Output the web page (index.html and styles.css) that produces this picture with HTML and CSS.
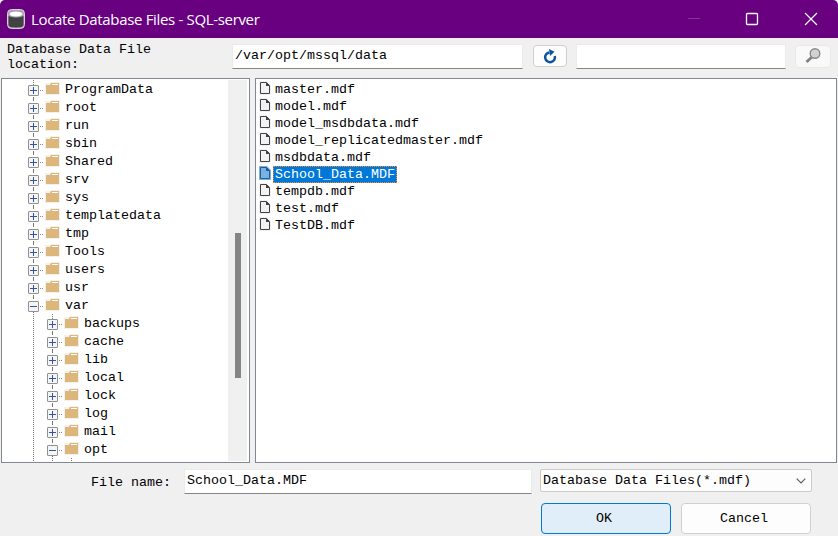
FILE: index.html
```
<!DOCTYPE html>
<html lang="en">
<head>
<meta charset="utf-8">
<title>Locate Database Files</title>
<link rel="stylesheet" href="styles.css">
</head>
<body>
<svg width="0" height="0" class="defs">
  <symbol id="folder" viewBox="0 0 15 13"><path d="M0 1h5V0h10v13H0z" fill="#f3f1ee"/><path d="M1 3h4l1-2h8v11H1z" fill="#dcb67a"/><path d="M7 2.500h6" stroke="#fff" fill="none"/></symbol>
  <symbol id="file" viewBox="0 0 12 14"><path d="M0 0h8l4 4v10H0z" class="halo"/><path d="M1.500 1.500h6l3 3v8h-9z" class="page"/><path d="M7 1l4 4H7z" class="fold"/></symbol>
</svg>
<div class="dialog">
  <header class="titlebar">
    <svg class="db" width="18" height="20" viewBox="0 0 18 20"><rect x=".5" y=".5" width="17" height="19" rx="4" fill="#a9a3ac" stroke="#d8cfdc"/><path d="M1.500 7q7.500 3 15 0v9q0 2.500-7.500 2.500T1.500 16z" fill="#424242"/><ellipse cx="9" cy="5" rx="6.500" ry="2.500" fill="#fff"/></svg>
    <h1>Locate Database Files - SQL-server</h1>
    <svg class="controls" width="132" height="14" viewBox="0 0 132 14" fill="none" stroke="#fff"><path d="M1 6.500h12" stroke="#86359a"/><rect x="59.500" y="1.500" width="11" height="11" rx="1" stroke-width="1.300"/><path d="M118 1l12 12M130 1l-12 12" stroke-width="1.200"/></svg>
  </header>
  <div class="toolbar">
    <div class="location">Database Data File<br>location:</div>
    <div class="field path">/var/opt/mssql/data</div>
    <div class="btn refresh"><svg width="14" height="15" viewBox="0 0 14 15"><path d="M6.500 3.400A4.900 4.900 0 1 0 11.800 7" fill="none" stroke="#0b559f" stroke-width="2.500"/><path d="M6 0l5.500 2.700L7 7z" fill="#0b559f"/></svg></div>
    <div class="field search"></div>
    <div class="btn find"><svg width="16" height="16" viewBox="0 0 16 16"><path d="M7.500 8.500L1.500 14" stroke="#828282" stroke-width="2.800"/><circle cx="10" cy="5.500" r="4.800" fill="#d2d2d2" stroke="#8b8b8b" stroke-width="1.400"/></svg></div>
  </div>
  <main class="panes">
    <div class="pane tree">
      <div class="rows">
        <div class="row"><i class="box plus"></i><svg><use href="#folder"/></svg><span>ProgramData</span></div>
        <div class="row"><i class="box plus"></i><svg><use href="#folder"/></svg><span>root</span></div>
        <div class="row"><i class="box plus"></i><svg><use href="#folder"/></svg><span>run</span></div>
        <div class="row"><i class="box plus"></i><svg><use href="#folder"/></svg><span>sbin</span></div>
        <div class="row"><i class="box plus"></i><svg><use href="#folder"/></svg><span>Shared</span></div>
        <div class="row"><i class="box plus"></i><svg><use href="#folder"/></svg><span>srv</span></div>
        <div class="row"><i class="box plus"></i><svg><use href="#folder"/></svg><span>sys</span></div>
        <div class="row"><i class="box plus"></i><svg><use href="#folder"/></svg><span>templatedata</span></div>
        <div class="row"><i class="box plus"></i><svg><use href="#folder"/></svg><span>tmp</span></div>
        <div class="row"><i class="box plus"></i><svg><use href="#folder"/></svg><span>Tools</span></div>
        <div class="row"><i class="box plus"></i><svg><use href="#folder"/></svg><span>users</span></div>
        <div class="row"><i class="box plus"></i><svg><use href="#folder"/></svg><span>usr</span></div>
        <div class="row"><i class="box"></i><svg><use href="#folder"/></svg><span>var</span></div>
        <div class="children">
          <div class="row"><i class="box plus"></i><svg><use href="#folder"/></svg><span>backups</span></div>
          <div class="row"><i class="box plus"></i><svg><use href="#folder"/></svg><span>cache</span></div>
          <div class="row"><i class="box plus"></i><svg><use href="#folder"/></svg><span>lib</span></div>
          <div class="row"><i class="box plus"></i><svg><use href="#folder"/></svg><span>local</span></div>
          <div class="row"><i class="box plus"></i><svg><use href="#folder"/></svg><span>lock</span></div>
          <div class="row"><i class="box plus"></i><svg><use href="#folder"/></svg><span>log</span></div>
          <div class="row"><i class="box plus"></i><svg><use href="#folder"/></svg><span>mail</span></div>
          <div class="row"><i class="box"></i><svg><use href="#folder"/></svg><span>opt</span></div>
          <div class="stub"></div>
        </div>
      </div>
      <div class="scroll"><div class="thumb"></div></div>
    </div>
    <div class="pane files">
      <div class="item"><svg><use href="#file"/></svg><span>master.mdf</span></div>
      <div class="item"><svg><use href="#file"/></svg><span>model.mdf</span></div>
      <div class="item"><svg><use href="#file"/></svg><span>model_msdbdata.mdf</span></div>
      <div class="item"><svg><use href="#file"/></svg><span>model_replicatedmaster.mdf</span></div>
      <div class="item"><svg><use href="#file"/></svg><span>msdbdata.mdf</span></div>
      <div class="item selected"><svg><use href="#file"/></svg><span>School_Data.MDF</span></div>
      <div class="item"><svg><use href="#file"/></svg><span>tempdb.mdf</span></div>
      <div class="item"><svg><use href="#file"/></svg><span>test.mdf</span></div>
      <div class="item"><svg><use href="#file"/></svg><span>TestDB.mdf</span></div>
    </div>
  </main>
  <div class="name-row">
    <div class="label">File name:</div>
    <div class="field filename">School_Data.MDF</div>
    <div class="select"><span>Database Data Files(*.mdf)</span><svg width="10" height="6" viewBox="0 0 10 6"><path d="M.7.700L5 5 9.300.700" fill="none" stroke="#606060" stroke-width="1.200"/></svg></div>
  </div>
  <div class="actions">
    <div class="action primary">OK</div>
    <div class="action">Cancel</div>
  </div>
</div>
</body>
</html>
```
FILE: styles.css
```
* { box-sizing: border-box; }
body { margin: 0; background: #fff; font: 13.333px/16px "Liberation Mono", monospace; color: #000; }
.defs { display: block; height: 0; }
.dialog { width: 838px; height: 536px; background: #f0f0f0; overflow: hidden; border-radius: 5px 5px 0 0; display: flex; flex-direction: column; }
.titlebar { height: 38px; flex: none; background: #68007f; display: flex; align-items: center; padding: 0 19px 0 7px; }
h1 { margin: 0 auto 0 6px; font: 400 15px/20px "Open Sans", "Noto Sans", sans-serif; letter-spacing: -.33px; color: #fff; white-space: nowrap; }
.toolbar { height: 40px; flex: none; display: flex; align-items: flex-start; padding-top: 6px; }
.location { width: 232px; padding-left: 7px; line-height: 15px; margin-top: -2px; }
.field { background: #fff; border: 1px solid #ebebeb; border-bottom-color: #868686; white-space: nowrap; }
.path { width: 291px; height: 25px; padding: 3px 2px; }
.btn { border: 1px solid #d0d0d0; border-radius: 4px; background: #fdfdfd; display: flex; align-items: center; justify-content: center; }
.refresh { width: 34px; height: 22px; margin: 1px 9px 0 10px; }
.search { width: 210px; height: 25px; }
.find { width: 36px; height: 23px; margin: 1px 0 0 9px; border-color: #e9e9e9; background: #f9f9f9; }
.find svg { margin: -2px 0 0 -1px; }
.panes { height: 385px; flex: none; display: flex; gap: 5px; padding: 0 1px; }
.pane { background: #fff; border: 1px solid #828790; overflow: hidden; }
.tree { width: 249px; display: flex; padding: 1px; }
.rows { width: 225px; padding-left: 25px; background: repeating-linear-gradient(#777 0 1px, #fff 1px 2px) 30px 0 / 1px 100% no-repeat; }
.row { height: 18px; display: flex; align-items: center; }
.box { width: 11px; height: 11px; border: 1px solid #919191; border-radius: 1px; flex: none; margin: 3px 7px 0 0; position: relative;
  background: linear-gradient(#3453a5, #3453a5) center / 7px 1px no-repeat, #f5f5f5; }
.plus { background: linear-gradient(#3453a5, #3453a5) center / 7px 1px no-repeat, linear-gradient(#3453a5, #3453a5) center / 1px 7px no-repeat, #f5f5f5; }
.box::after { content: ""; position: absolute; left: 11px; top: 4px; width: 3px; height: 1px; background: linear-gradient(90deg, #888 1px, #fff 1px 2px, #888 2px); }
.plus::before { content: ""; position: absolute; left: 4px; top: 10px; width: 1px; height: 7px; background: linear-gradient(#fff 1px, #777 1px 5px, #fff 5px); }
.row svg { width: 15px; height: 13px; flex: none; margin: -1px 4px 0 -1px; }
.row span { white-space: pre; padding-top: 1px; }
.children { padding-left: 19px; background: repeating-linear-gradient(#777 0 1px, #fff 1px 2px) 24px 0 / 1px 100% no-repeat; }
.row svg + span { margin-left: 1px; }
.stub { height: 3px; margin-left: 24px; border-left: 1px dotted #777; }
.scroll { width: 19px; background: #f0f0f0; padding: 153px 0 0 7px; }
.thumb { width: 6px; height: 145px; background: #858585; }
.files { width: 582px; padding: 2px 0 0 3px; }
.item { height: 17px; display: flex; --paper: #f2f2f4; --ink: #424242; }
.item svg { width: 12px; height: 14px; margin-right: 2px; }
.item span { height: 17px; padding: 0 2px; line-height: 17px; }
.halo { fill: var(--paper); }
.page { fill: var(--paper); stroke: var(--ink); }
.fold { fill: var(--ink); }
.selected { --paper: #79b3e5; --ink: #215d90; }
.selected span { background: #0078d7; color: #fff; outline: 1px dotted #ff8728; outline-offset: -1px; }
.name-row { height: 31px; flex: none; display: flex; padding-top: 6px; }
.label { width: 184px; padding: 6px 0 0 91px; white-space: nowrap; }
.filename { width: 348px; height: 25px; padding: 3px 2px; }
.select { width: 272px; height: 23px; margin-left: 8px; border: 1px solid #cbcbcb; border-radius: 2px; background: #fdfdfd; padding: 0 5px 0 2px; display: flex; align-items: center; justify-content: space-between; }
.actions { display: flex; gap: 10px; margin: 9px 0 0 541px; }
.action { width: 130px; height: 31px; border: 1px solid #d0d0d0; border-radius: 4px; background: #fdfdfd; display: flex; align-items: center; justify-content: center; padding-right: 4px; }
.primary { background: #e0eef9; border-color: #0078d4; }
```
